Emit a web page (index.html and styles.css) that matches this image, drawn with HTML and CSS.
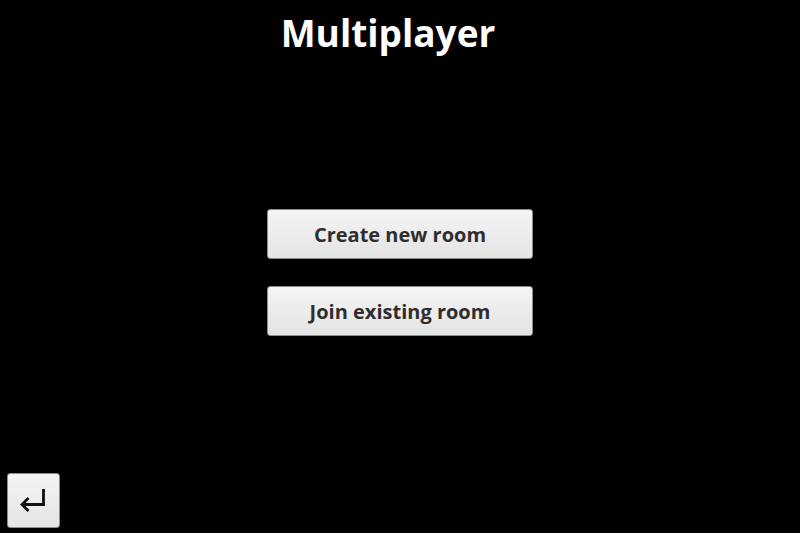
FILE: index.html
```html
<!DOCTYPE html>
<html>
<head>
<meta charset="utf-8">
<link rel="stylesheet" href="styles.css">
</head>
<body>
<div class="screen">
  <h1 class="title">Multiplayer</h1>
  <div class="menu">
    <button class="btn">Create new room</button>
    <button class="btn">Join existing room</button>
  </div>
  <div class="footer">
    <button class="back" aria-label="Back">
      <svg width="28" height="26" viewBox="0 0 28 26">
        <path d="M23.5 1 V16.5 H3" fill="none" stroke="#111" stroke-width="2.8" stroke-linejoin="miter"/>
        <path d="M8.5 10 L2 16.5 L8.5 23" fill="none" stroke="#111" stroke-width="2.8" stroke-linejoin="miter"/>
      </svg>
    </button>
  </div>
</div>
</body>
</html>
```
FILE: styles.css
```css
html, body {
  margin: 0;
  padding: 0;
  background: #000;
}
.screen {
  width: 800px;
  height: 533px;
  display: flex;
  flex-direction: column;
  align-items: center;
  font-family: "Open Sans", "Noto Sans", sans-serif;
}
.title {
  margin: 5px 0 0;
  padding-right: 24px;
  color: #fff;
  font-size: 37px;
  font-weight: 700;
  line-height: 56px;
}
.menu {
  margin-top: 148px;
  display: flex;
  flex-direction: column;
  gap: 27px;
}
.btn {
  width: 266px;
  height: 50px;
  border: 1px solid #8c8c8c;
  border-radius: 3px;
  background: linear-gradient(#f4f4f4, #e4e4e4);
  color: #2e2e2e;
  font-family: "Open Sans", "Noto Sans", sans-serif;
  font-size: 20px;
  font-weight: 700;
  padding: 0;
}
.footer {
  margin-top: auto;
  align-self: stretch;
  padding: 0 0 5px 7px;
}
.back {
  width: 53px;
  height: 55px;
  border: 1px solid #8c8c8c;
  border-radius: 3px;
  background: linear-gradient(#f4f4f4, #e4e4e4);
  display: flex;
  align-items: center;
  justify-content: center;
  padding: 0;
}
```
